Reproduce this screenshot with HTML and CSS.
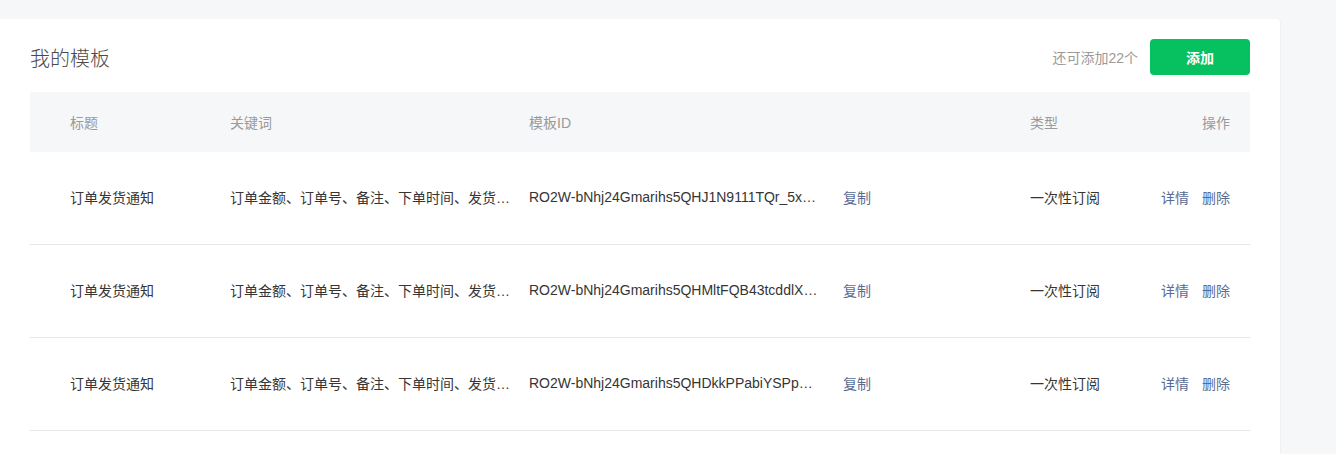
FILE: index.html
```html
<!DOCTYPE html>
<html lang="zh-CN">
<head>
  <meta charset="UTF-8">
  <meta name="viewport" content="width=device-width, initial-scale=1.0">
  <title>我的模板</title>
  <link rel="stylesheet" href="styles.css">
</head>
<body>
  <div class="card">
    <div class="card-head">
      <h2 class="card-title">我的模板</h2>
      <div class="card-extra">
        <span class="quota">还可添加22个</span>
        <button class="btn-add">添加</button>
      </div>
    </div>

    <table class="tpl-table">
      <colgroup>
        <col class="col-title">
        <col class="col-kw">
        <col class="col-id">
        <col class="col-type">
        <col class="col-op">
      </colgroup>
      <thead>
        <tr>
          <th class="c-title">标题</th>
          <th>关键词</th>
          <th>模板ID</th>
          <th>类型</th>
          <th class="c-op">操作</th>
        </tr>
      </thead>
      <tbody>
        <tr>
          <td class="c-title">订单发货通知</td>
          <td><span class="ellipsis kw">订单金额、订单号、备注、下单时间、发货时间、物流单号</span></td>
          <td><span class="ellipsis tid">RO2W-bNhj24Gmarihs5QHJ1N9111TQr_5xYzKqPmW</span><a class="link copy">复制</a></td>
          <td>一次性订阅</td>
          <td class="c-op"><a class="link">详情</a><a class="link">删除</a></td>
        </tr>
        <tr>
          <td class="c-title">订单发货通知</td>
          <td><span class="ellipsis kw">订单金额、订单号、备注、下单时间、发货时间、物流单号</span></td>
          <td><span class="ellipsis tid">RO2W-bNhj24Gmarihs5QHMltFQB43tcddlXaPq2</span><a class="link copy">复制</a></td>
          <td>一次性订阅</td>
          <td class="c-op"><a class="link">详情</a><a class="link">删除</a></td>
        </tr>
        <tr>
          <td class="c-title">订单发货通知</td>
          <td><span class="ellipsis kw">订单金额、订单号、备注、下单时间、发货时间、物流单号</span></td>
          <td><span class="ellipsis tid">RO2W-bNhj24Gmarihs5QHDkkPPabiYSPpQ7mWx</span><a class="link copy">复制</a></td>
          <td>一次性订阅</td>
          <td class="c-op"><a class="link">详情</a><a class="link">删除</a></td>
        </tr>
      </tbody>
    </table>
  </div>
</body>
</html>
```

FILE: styles.css
```css
body {
  margin: 0;
  padding: 19px 55px 0 0;
  background: #f6f7f9;
  font-family: "Liberation Sans", "Noto Sans CJK SC", sans-serif;
  font-size: 14px;
  color: #353535;
}
.card {
  background: #fff;
  border-radius: 0 4px 0 0;
  border-right: 1px solid #eef0f3;
  padding: 20px 30px 24px;
}
.card-head {
  display: flex;
  align-items: center;
  justify-content: space-between;
  height: 36px;
  margin-bottom: 17px;
}
.card-title {
  margin: 0;
  font-size: 20px;
  font-weight: 300;
  color: #4a4a4a;
}
.card-extra {
  display: flex;
  align-items: center;
}
.quota {
  color: #9a9a9a;
  margin-right: 12px;
}
.btn-add {
  width: 100px;
  height: 36px;
  border: none;
  border-radius: 4px;
  background: #07c160;
  color: #fff;
  font-family: inherit;
  font-size: 14px;
  font-weight: bold;
}
.tpl-table {
  width: 100%;
  border-collapse: collapse;
  table-layout: fixed;
}
.col-title { width: 200px; }
.col-kw { width: 299px; }
.col-id { width: 501px; }
.col-type { width: 100px; }
.tpl-table th {
  height: 60px;
  padding: 0;
  background: #f6f7f9;
  color: #9a9a9a;
  font-weight: normal;
  text-align: left;
}
.tpl-table td {
  height: 90px;
  padding: 0 0 2px;
  border-bottom: 1px solid #e7e7e7;
  white-space: nowrap;
}
.tpl-table .c-title { padding-left: 40px; }
.tpl-table .c-op {
  text-align: right;
  padding-right: 20px;
}
.ellipsis {
  display: inline-block;
  overflow: hidden;
  text-overflow: ellipsis;
  white-space: nowrap;
  vertical-align: middle;
}
.kw { max-width: 280px; }
.tid { max-width: 294px; }
.link {
  color: #576b95;
  cursor: pointer;
  vertical-align: middle;
}
.copy { margin-left: 20px; }
.c-op .link + .link { margin-left: 13px; }
```
